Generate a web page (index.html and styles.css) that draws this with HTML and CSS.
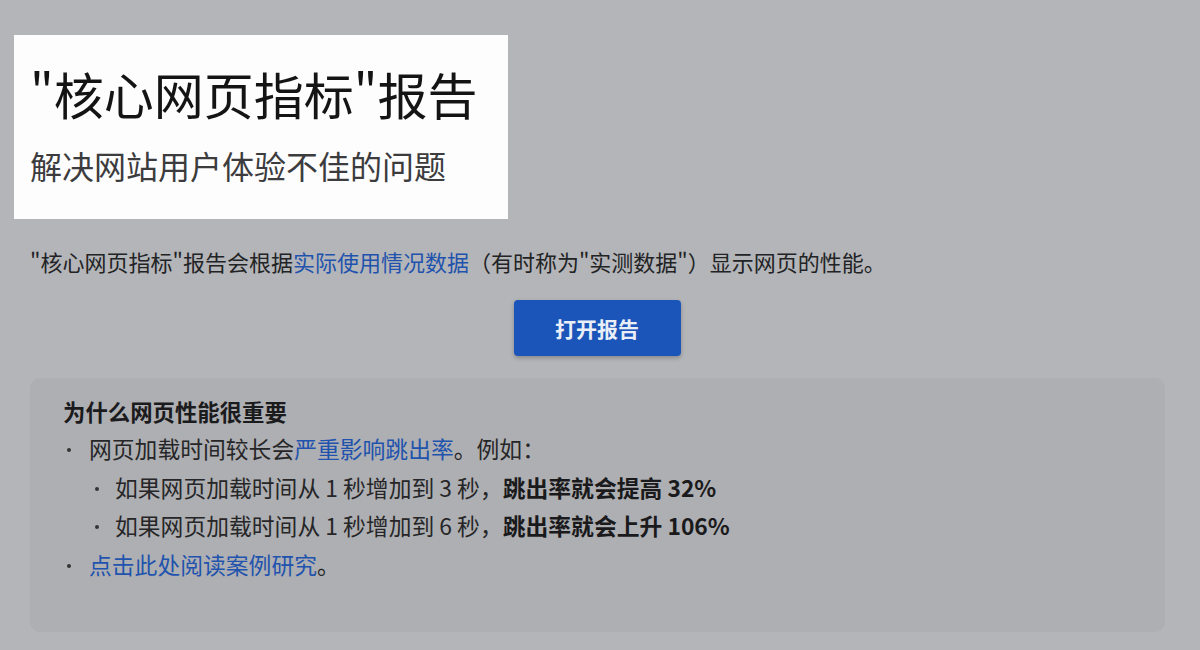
FILE: index.html
```html
<!DOCTYPE html>
<html lang="zh-CN">
<head>
<meta charset="utf-8">
<link rel="stylesheet" href="styles.css">
</head>
<body>
<div class="page">
  <div class="hero">
    <h1 class="title">"核心网页指标"报告</h1>
    <p class="subtitle">解决网站用户体验不佳的问题</p>
  </div>
  <p class="intro">"核心网页指标"报告会根据<a class="link" href="#">实际使用情况数据</a>（有时称为"实测数据"）显示网页的性能。</p>
  <div class="actions">
    <a class="btn" href="#">打开报告</a>
  </div>
  <div class="panel">
    <h2 class="panel-title">为什么网页性能很重要</h2>
    <ul class="list">
      <li>网页加载时间较长会<a class="link" href="#">严重影响跳出率</a>。例如：
        <ul class="sublist">
          <li>如果网页加载时间从 1 秒增加到 3 秒，<b>跳出率就会提高 32%</b></li>
          <li>如果网页加载时间从 1 秒增加到 6 秒，<b>跳出率就会上升 106%</b></li>
        </ul>
      </li>
      <li><a class="link" href="#">点击此处阅读案例研究</a>。</li>
    </ul>
  </div>
</div>
</body>
</html>
```

FILE: styles.css
```css
* { box-sizing: border-box; }
html, body {
  margin: 0;
  padding: 0;
  background: #b4b5b8;
  width: 1200px;
  height: 650px;
  overflow: hidden;
  font-family: "Noto Sans CJK SC", "Noto Sans", sans-serif;
  color: #1e1f21;
}
.page {
  padding-top: 35px;
}
.hero {
  margin-left: 14px;
  width: 494px;
  height: 184px;
  background: #fdfdfd;
  padding: 26px 0 0 16px;
}
.title {
  margin: 0;
  font-size: 50px;
  font-weight: 400;
  line-height: 64px;
  color: #141414;
}
.subtitle {
  margin: 20px 0 0 0;
  font-size: 32px;
  font-weight: 400;
  line-height: 40px;
  color: #3c3c3e;
}
.intro {
  margin: 27px 0 0 30px;
  font-size: 22px;
  line-height: 30px;
  color: #222325;
}
.link {
  color: #1f53ad;
  text-decoration: none;
}
.actions {
  display: flex;
  justify-content: center;
  margin-top: 24px;
  padding-right: 6px;
}
.btn {
  display: flex;
  align-items: center;
  justify-content: center;
  width: 167px;
  height: 56px;
  background: #1b55b9;
  color: #e9eef7;
  border-radius: 4px;
  font-size: 21px;
  font-weight: 700;
  text-decoration: none;
  box-shadow: 0 2px 4px rgba(0,0,0,0.25);
}
.panel {
  margin: 22px 35px 0 30px;
  height: 254px;
  background: #aeafb2;
  border-radius: 10px;
  padding: 18px 0 0 33px;
}
.panel-title {
  margin: 0;
  font-size: 22.4px;
  font-weight: 700;
  line-height: 30px;
  color: #1b1b1d;
}
.list {
  margin: 4px 0 0 0;
  padding: 0;
  list-style: none;
  font-size: 22.8px;
  line-height: 38.7px;
  color: #262628;
}
.list > li,
.sublist > li {
  position: relative;
  padding-left: 24px;
}
.list > li::before,
.sublist > li::before {
  content: "";
  position: absolute;
  left: 4px;
  top: 18px;
  width: 4px;
  height: 4px;
  border-radius: 50%;
  background: #333;
}
.list > li {
  padding-left: 26px;
}
.sublist {
  margin: 0;
  padding: 0 0 0 2px;
  list-style: none;
}
.sublist b {
  font-weight: 700;
  color: #1a1a1c;
}
```
